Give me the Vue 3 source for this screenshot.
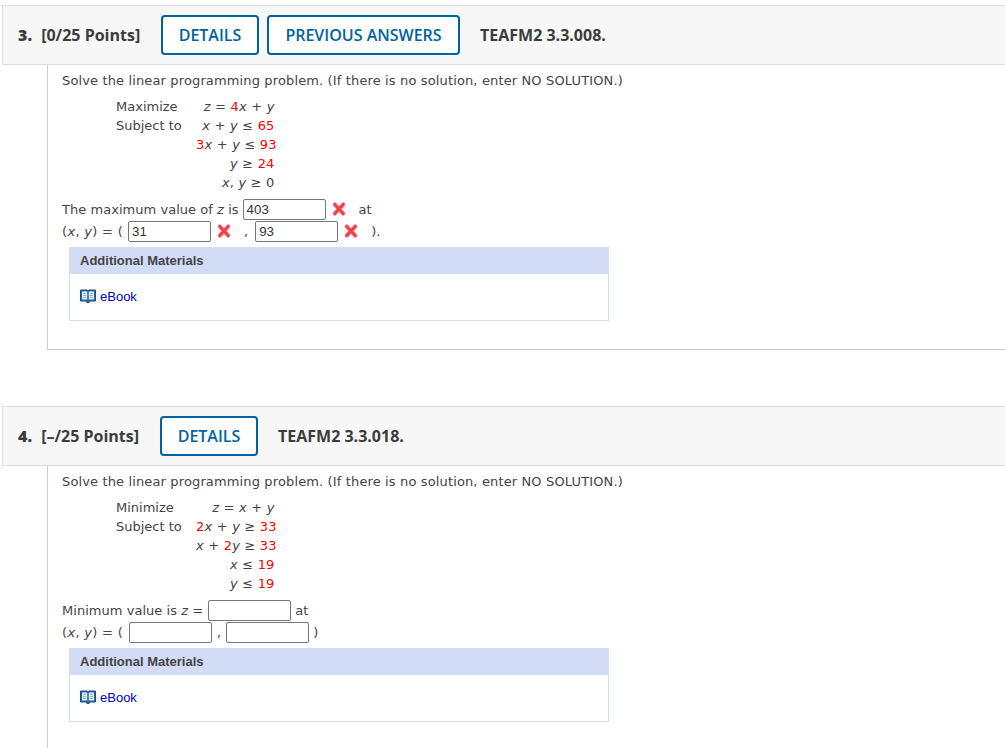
<script setup>
</script>

<template>
  <div class="page">
    <section class="question first">
      <header class="head">
        <span class="pts"><b class="num">3.</b> [0/25 Points]</span>
        <button class="btn details">DETAILS</button>
        <button class="btn prev">PREVIOUS ANSWERS</button>
        <span class="code">TEAFM2 3.3.008.</span>
      </header>
      <div class="body">
        <p class="intro">Solve the linear programming problem. (If there is no solution, enter NO SOLUTION.)</p>
        <div class="lp">
          <span>Maximize</span><span class="m"><i>z</i> = <em>4</em><i>x</i> + <i>y</i></span>
          <span>Subject to</span><span class="m"><i>x</i> + <i>y</i> ≤ <em>65</em></span>
          <span></span><span class="m"><em>3</em><i>x</i> + <i>y</i> ≤ <em>93</em></span>
          <span></span><span class="m"><i>y</i> ≥ <em>24</em></span>
          <span></span><span class="m"><i>x</i>, <i>y</i> ≥ 0</span>
        </div>
        <div class="ans a1">
          <span>The maximum value of <i>z</i> is</span>
          <span class="inp ml4">403</span>
          <svg class="x" viewBox="0 0 14 14"><path d="M2.8 2.4 L11.2 11.6 M11.2 2.4 L2.8 11.6" stroke="#f9a6aa" stroke-width="4.4" stroke-linecap="round"/><path d="M2.8 2.4 L11.2 11.6 M11.2 2.4 L2.8 11.6" stroke="#ef3f48" stroke-width="3" stroke-linecap="round"/></svg>
          <span class="after-x">at</span>
        </div>
        <div class="ans a2">
          <span class="pre">(<i>x</i>, <i>y</i>) = (</span>
          <span class="inp ml5">31</span>
          <svg class="x" viewBox="0 0 14 14"><path d="M2.8 2.4 L11.2 11.6 M11.2 2.4 L2.8 11.6" stroke="#f9a6aa" stroke-width="4.4" stroke-linecap="round"/><path d="M2.8 2.4 L11.2 11.6 M11.2 2.4 L2.8 11.6" stroke="#ef3f48" stroke-width="3" stroke-linecap="round"/></svg>
          <span class="comma">,</span>
          <span class="inp ml5b">93</span>
          <svg class="x" viewBox="0 0 14 14"><path d="M2.8 2.4 L11.2 11.6 M11.2 2.4 L2.8 11.6" stroke="#f9a6aa" stroke-width="4.4" stroke-linecap="round"/><path d="M2.8 2.4 L11.2 11.6 M11.2 2.4 L2.8 11.6" stroke="#ef3f48" stroke-width="3" stroke-linecap="round"/></svg>
          <span class="after-x">).</span>
        </div>
        <div class="mat">
          <div class="mat-h">Additional Materials</div>
          <div class="mat-b">
            <svg class="book" viewBox="0 0 16 14"><path d="M0.5 1h6.5l1 .8 1-.8h6.5v11H9.6l-.6 1.5H7l-.6-1.5H.5z" fill="#1f6aa8" stroke="#17507f" stroke-width="1"/><path d="M2 2.5h5.2v8H2zM8.8 2.5H14v8H8.8z" fill="#e6edf2"/><path d="M3 4.5h3.2M3 6.5h3.2M3 8.5h3.2M9.8 4.5H13M9.8 6.5H13M9.8 8.5H13" stroke="#9db2c2" stroke-width="1"/></svg>
            <a class="link">eBook</a>
          </div>
        </div>
      </div>
    </section>

    <section class="question second">
      <header class="head">
        <span class="pts"><b class="num">4.</b> [–/25 Points]</span>
        <button class="btn details d2">DETAILS</button>
        <span class="code">TEAFM2 3.3.018.</span>
      </header>
      <div class="body">
        <p class="intro">Solve the linear programming problem. (If there is no solution, enter NO SOLUTION.)</p>
        <div class="lp">
          <span>Minimize</span><span class="m"><i>z</i> = <i>x</i> + <i>y</i></span>
          <span>Subject to</span><span class="m"><em>2</em><i>x</i> + <i>y</i> ≥ <em>33</em></span>
          <span></span><span class="m"><i>x</i> + <em>2</em><i>y</i> ≥ <em>33</em></span>
          <span></span><span class="m"><i>x</i> ≤ <em>19</em></span>
          <span></span><span class="m"><i>y</i> ≤ <em>19</em></span>
        </div>
        <div class="ans a1">
          <span>Minimum value is <i>z</i> =</span>
          <span class="inp ml6"></span>
          <span class="ml4">at</span>
        </div>
        <div class="ans a2">
          <span class="pre">(<i>x</i>, <i>y</i>) = (</span>
          <span class="inp ml7"></span>
          <span class="comma2">,</span>
          <span class="inp ml8"></span>
          <span class="ml4">)</span>
        </div>
        <div class="mat">
          <div class="mat-h">Additional Materials</div>
          <div class="mat-b">
            <svg class="book" viewBox="0 0 16 14"><path d="M0.5 1h6.5l1 .8 1-.8h6.5v11H9.6l-.6 1.5H7l-.6-1.5H.5z" fill="#1f6aa8" stroke="#17507f" stroke-width="1"/><path d="M2 2.5h5.2v8H2zM8.8 2.5H14v8H8.8z" fill="#e6edf2"/><path d="M3 4.5h3.2M3 6.5h3.2M3 8.5h3.2M9.8 4.5H13M9.8 6.5H13M9.8 8.5H13" stroke="#9db2c2" stroke-width="1"/></svg>
            <a class="link">eBook</a>
          </div>
        </div>
      </div>
    </section>
  </div>
</template>

<style>
html, body { margin: 0; background: #fff; overflow: hidden; height: 748px; }
</style>

<style scoped>
.page {
  width: 1005px;
  height: 748px;
  overflow: hidden;
  padding: 5px 0 0 2px;
  box-sizing: border-box;
  font-family: "DejaVu Sans", sans-serif;
  font-size: 13px;
  color: #444;
}
.question { width: 1010px; }
.head {
  height: 60px;
  box-sizing: border-box;
  display: flex;
  align-items: center;
  background: #f7f7f7;
  border: 1px solid #ddd;
  padding-left: 15px;
  font-family: "Open Sans", sans-serif;
  font-size: 16px;
  font-weight: 700;
  color: #3c3c3c;
}
.pts { width: 143px; white-space: nowrap; }
.num { margin-right: 5px; }
.btn {
  height: 40px;
  box-sizing: border-box;
  border: 2px solid #00639e;
  border-radius: 4px;
  background: #fff;
  color: #00639e;
  font: 600 16px "Open Sans", sans-serif;
  padding: 0;
}
.details { width: 98px; }
.d2 { margin-left: -1px; }
.prev { width: 193px; margin-left: 8px; }
.code { margin-left: 20px; }
.body {
  margin-left: 45px;
  border-left: 1px solid #ccc;
  padding-left: 14px;
  box-sizing: border-box;
}
.first .body { height: 285px; border-bottom: 1px solid #ccc; }
.second { margin-top: 56px; }
.second .body { height: 300px; }
.intro { margin: 0; padding-top: 7px; line-height: 18px; height: 19px; letter-spacing: 0.136px; }
.lp {
  display: grid;
  grid-template-columns: 80px 78.6px;
  grid-auto-rows: 19px;
  line-height: 19px;
  margin-left: 54px;
  padding-top: 6px;
}
.m { text-align: right; white-space: nowrap; letter-spacing: 0.2px; }
em { font-style: normal; color: #f00; }
.ans { display: flex; align-items: center; height: 22px; white-space: nowrap; }
.a1 { margin-top: 6px; letter-spacing: 0.04px; }
.pre { letter-spacing: 0.3px; }
.inp {
  display: block;
  width: 83px;
  height: 21px;
  box-sizing: border-box;
  border: 1px solid #777;
  border-radius: 2px;
  background: #fff;
  font: 13.33px/19px "Liberation Sans", sans-serif;
  letter-spacing: 0;
  padding-left: 3px;
  color: #333;
}
.ml4 { margin-left: 4px; }
.ml5 { margin-left: 5px; }
.ml5b { margin-left: 7px; }
.ml6 { margin-left: 5px; }
.ml7 { margin-left: 6px; }
.ml8 { margin-left: 5px; }
.x { width: 14px; height: 14px; margin-left: 6px; flex: none; }
.after-x { margin-left: 13px; }
.comma { margin-left: 13px; }
.comma2 { margin-left: 5px; }
.mat {
  width: 540px;
  margin: 5px 0 0 7px;
  box-sizing: border-box;
  border: 1px solid #d2dcf6;
  font-family: "Liberation Sans", sans-serif;
}
.mat-h {
  height: 26px;
  background: #d2dcf6;
  font-size: 13px;
  font-weight: 700;
  line-height: 26px;
  padding-left: 10px;
}
.mat-b {
  height: 44px;
  padding-bottom: 2px;
  display: flex;
  align-items: center;
  padding-left: 10px;
  font-size: 13px;
}
.book { width: 16px; height: 14px; margin-right: 4px; }
.link { color: #00c; }
</style>
